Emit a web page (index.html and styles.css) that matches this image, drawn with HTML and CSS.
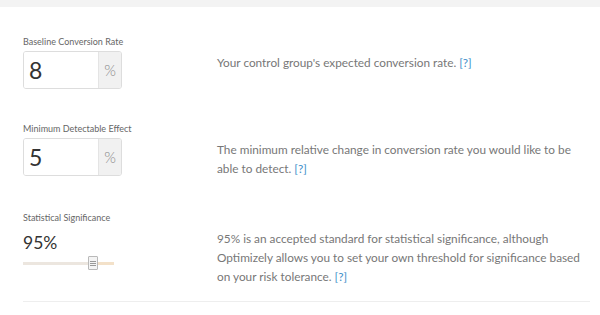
FILE: index.html
```html
<!DOCTYPE html>
<html lang="en">
<head>
    <meta charset="UTF-8">
    <meta name="viewport" content="width=device-width, initial-scale=1.0">
    <title>Sample Size Calculator</title>
    <link rel="stylesheet" href="styles.css">
</head>
<body>

    <div class="top-bar"></div>

    <div class="calculator">
        <div class="field-row">
            <div class="field">
                <label for="baseline">Baseline Conversion Rate</label>
                <div class="input-group">
                    <input type="text" id="baseline" value="8">
                    <span class="addon">%</span>
                </div>
            </div>
            <p class="help">Your control group's expected conversion rate. <a href="#">[?]</a></p>
        </div>

        <div class="field-row">
            <div class="field">
                <label for="mde">Minimum Detectable Effect</label>
                <div class="input-group">
                    <input type="text" id="mde" value="5">
                    <span class="addon">%</span>
                </div>
            </div>
            <p class="help">The minimum relative change in conversion rate you would like to be able to detect. <a href="#">[?]</a></p>
        </div>

        <div class="field-row last">
            <div class="field">
                <label>Statistical Significance</label>
                <div class="big-value">95%</div>
                <div class="slider">
                    <div class="slider-track"></div>
                    <div class="slider-thumb"><span></span><span></span><span></span></div>
                </div>
            </div>
            <p class="help">95% is an accepted standard for statistical significance, although Optimizely allows you to set your own threshold for significance based on your risk tolerance. <a href="#">[?]</a></p>
        </div>
    </div>

</body>
</html>
```

FILE: styles.css
```css
body {
    font-family: Lato, "Open Sans", Arial, sans-serif;
    background-color: #ffffff;
    margin: 0;
    color: #666;
}
.top-bar {
    height: 7px;
    background-color: #f3f3f3;
}
.calculator {
    padding: 28px 10px 0 23px;
}
.field-row {
    display: grid;
    grid-template-columns: 194px 370px;
    padding-bottom: 33px;
}
.field-row.last {
    padding-bottom: 15px;
    border-bottom: 1px solid #eeeeee;
}
.field label {
    display: block;
    font-size: 9px;
    line-height: 14px;
    margin-bottom: 2px;
    color: #666;
}
.input-group {
    display: flex;
    width: 99px;
    height: 38px;
    border: 1px solid #dddddd;
    border-radius: 3px;
    box-sizing: border-box;
    overflow: hidden;
}
.input-group input {
    flex: none;
    width: 74px;
    box-sizing: border-box;
    border: none;
    padding: 0 5px;
    font-family: inherit;
    font-size: 23px;
    color: #333;
    outline: none;
}
.addon {
    flex: 1;
    background-color: #f1f1f1;
    border-left: 1px solid #e4e4e4;
    display: flex;
    align-items: center;
    justify-content: center;
    font-size: 15px;
    font-weight: 300;
    color: #888;
}
.big-value {
    font-size: 17.5px;
    line-height: 26px;
    color: #333;
    margin-top: 5px;
}
.slider {
    position: relative;
    width: 91px;
    height: 14px;
}
.slider-track {
    position: absolute;
    left: 0;
    right: 0;
    top: 6px;
    height: 3px;
    background: linear-gradient(to right, #ece6df 72%, #f3e1c9 72%);
}
.slider-thumb {
    position: absolute;
    left: 65px;
    top: 0;
    width: 6px;
    height: 12px;
    background-color: #f4f4f4;
    border: 1px solid #b9b9b9;
    border-radius: 1px;
    display: flex;
    flex-direction: column;
    justify-content: center;
    gap: 1px;
    padding: 0 1px;
}
.slider-thumb span {
    height: 1px;
    background-color: #999;
}
.help {
    margin: 0;
    padding-top: 18px;
    font-size: 11.8px;
    line-height: 19px;
    color: #777;
}
.help a {
    color: #3d8ec9;
    text-decoration: none;
}
```
